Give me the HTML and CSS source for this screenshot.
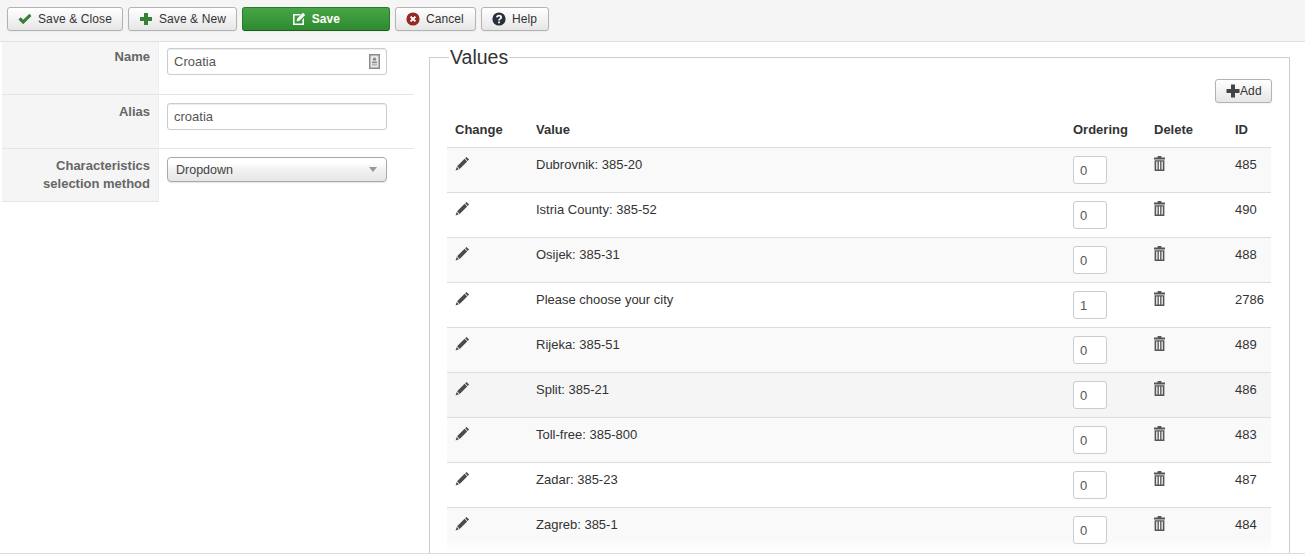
FILE: index.html
```html
<!DOCTYPE html>
<html lang="en">
<head>
<meta charset="utf-8">
<title>Edit characteristic</title>
<link rel="stylesheet" href="styles.css">
</head>
<body>
<svg class="defs" aria-hidden="true">
  <defs>
    <symbol id="pencil" viewBox="0 0 16 16"><path d="M12.2 1 15 3.8 13.6 5.2 10.8 2.4ZM10.2 3 13 5.8 5 13.8 2.2 11ZM1.8 11.8 4.2 14.2 0.6 15.4Z"/></symbol>
    <symbol id="trash" viewBox="0 0 11 15"><path d="M3.6 0H7.4V1.6H11V3.4H0V1.6H3.6ZM.6 4.2H10.4V15H.6ZM2.2 5.6V13.6H3.5V5.6ZM4.85 5.6V13.6H6.15V5.6ZM7.5 5.6V13.6H8.8V5.6Z" fill-rule="evenodd"/></symbol>
  </defs>
</svg>
<header class="toolbar">
  <button class="btn" type="button"><svg class="ico" viewBox="0 0 14 14"><path class="green" d="M.5 7.5 2.6 5.2 5.2 7.8 11.4 1.8 13.5 4 5.2 12.2Z"/></svg>Save &amp; Close</button>
  <button class="btn" type="button"><svg class="ico ico-plus" viewBox="0 0 14 14"><path class="green" d="M5 1H9V5H13V9H9V13H5V9H1V5H5Z"/></svg>Save &amp; New</button>
  <button class="btn btn-save" type="button"><svg class="ico" viewBox="0 0 14 14"><path fill="#fff" fill-rule="evenodd" d="M1 2H9L7.4 3.6H2.6V11.4H10.4V7.6L12 6V13H1ZM11 .8 13.2 3 7.4 8.8 4.6 9.4 5.2 6.6Z"/></svg>Save</button>
  <button class="btn btn-pad" type="button"><svg class="ico" viewBox="0 0 14 14"><circle cx="7" cy="7" r="6.6" fill="#942a25"/><path d="M4.6 4.6 9.4 9.4M9.4 4.6 4.6 9.4" stroke="#fff" stroke-width="2"/></svg>Cancel</button>
  <button class="btn btn-pad" type="button"><svg class="ico" viewBox="0 0 14 14"><circle cx="7" cy="7" r="6.6" fill="#26303a"/><path d="M4.9 5.4C5 3 9.2 3 9.2 5.4 9.2 7 7 6.8 7 8.4" fill="none" stroke="#fff" stroke-width="1.7"/><rect x="6.1" y="9.5" width="1.8" height="1.8" fill="#fff"/></svg>Help</button>
</header>
<main class="page">
  <section class="form">
    <div class="form-row row-name">
      <label class="form-label" for="name">Name</label>
      <div class="form-field">
        <div class="input-wrap">
          <input class="text-input" id="name" type="text" value="Croatia">
          <svg class="input-badge" viewBox="0 0 11 15"><rect x=".75" y=".75" width="9.5" height="13.5" fill="#e8e8e8" stroke="#8a8a8a" stroke-width="1.5"/><circle cx="5.5" cy="5.2" r="1.6" fill="#8a8a8a"/><rect x="3" y="7.6" width="5" height="1.6" fill="#8a8a8a"/><rect x="3" y="10" width="5" height="1.6" fill="#b5b5b5"/></svg>
        </div>
      </div>
    </div>
    <div class="form-row row-alias">
      <label class="form-label" for="alias">Alias</label>
      <div class="form-field"><input class="text-input" id="alias" type="text" value="croatia"></div>
    </div>
    <div class="form-row row-method">
      <div class="form-label">Characteristics selection method</div>
      <div class="form-field">
        <div class="select"><span>Dropdown</span><i class="caret"></i></div>
      </div>
    </div>
  </section>
  <fieldset class="values">
    <legend>Values</legend>
    <div class="values-actions">
      <button class="btn btn-add" type="button"><svg class="ico-add" viewBox="0 0 14 14"><path d="M5 .5H9V5H13.5V9H9V13.5H5V9H.5V5H5Z" fill="#444"/></svg>Add</button>
    </div>
    <table class="grid">
      <colgroup><col class="c-change"><col class="c-value"><col class="c-order"><col class="c-delete"><col class="c-id"></colgroup>
      <thead><tr><th>Change</th><th>Value</th><th>Ordering</th><th>Delete</th><th>ID</th></tr></thead>
      <tbody>
        <tr class="odd"><td><svg class="pen"><use href="#pencil"/></svg></td><td>Dubrovnik: 385-20</td><td><input class="order" type="text" value="0"></td><td><svg class="bin"><use href="#trash"/></svg></td><td>485</td></tr>
        <tr><td><svg class="pen"><use href="#pencil"/></svg></td><td>Istria County: 385-52</td><td><input class="order" type="text" value="0"></td><td><svg class="bin"><use href="#trash"/></svg></td><td>490</td></tr>
        <tr class="odd"><td><svg class="pen"><use href="#pencil"/></svg></td><td>Osijek: 385-31</td><td><input class="order" type="text" value="0"></td><td><svg class="bin"><use href="#trash"/></svg></td><td>488</td></tr>
        <tr><td><svg class="pen"><use href="#pencil"/></svg></td><td>Please choose your city</td><td><input class="order" type="text" value="1"></td><td><svg class="bin"><use href="#trash"/></svg></td><td>2786</td></tr>
        <tr class="odd"><td><svg class="pen"><use href="#pencil"/></svg></td><td>Rijeka: 385-51</td><td><input class="order" type="text" value="0"></td><td><svg class="bin"><use href="#trash"/></svg></td><td>489</td></tr>
        <tr class="hover"><td><svg class="pen"><use href="#pencil"/></svg></td><td>Split: 385-21</td><td><input class="order" type="text" value="0"></td><td><svg class="bin"><use href="#trash"/></svg></td><td>486</td></tr>
        <tr class="odd"><td><svg class="pen"><use href="#pencil"/></svg></td><td>Toll-free: 385-800</td><td><input class="order" type="text" value="0"></td><td><svg class="bin"><use href="#trash"/></svg></td><td>483</td></tr>
        <tr><td><svg class="pen"><use href="#pencil"/></svg></td><td>Zadar: 385-23</td><td><input class="order" type="text" value="0"></td><td><svg class="bin"><use href="#trash"/></svg></td><td>487</td></tr>
        <tr class="fade"><td><svg class="pen"><use href="#pencil"/></svg></td><td>Zagreb: 385-1</td><td><input class="order" type="text" value="0"></td><td><svg class="bin"><use href="#trash"/></svg></td><td>484</td></tr>
      </tbody>
    </table>
  </fieldset>
</main>
</body>
</html>
```

FILE: styles.css
```css
* { box-sizing: border-box; }
html, body { margin: 0; height: 555px; overflow: hidden; background: #fff; }
body { font: 13px/18px "Liberation Sans", Arial, sans-serif; color: #333; }
.defs { display: none; }

.toolbar {
  display: flex;
  gap: 5px;
  height: 42px;
  padding: 7px 0 0 7px;
  background: #f5f5f5;
  border-bottom: 1px solid #e1e1e1;
}
.btn {
  display: inline-flex;
  align-items: center;
  height: 24px;
  padding: 0 10px;
  font: 12px/18px "Liberation Sans", Arial, sans-serif;
  letter-spacing: .1px;
  color: #333;
  background: linear-gradient(#fff, #e6e6e6);
  border: 1px solid #b3b3b3;
  border-radius: 3px;
  box-shadow: 0 1px 2px rgba(0,0,0,.05);
}
.btn-pad { padding-right: 11px; }
.btn-save {
  justify-content: center;
  width: 148px;
  color: #fff;
  font-weight: bold;
  background: linear-gradient(#46a546, #2f8a2f);
  border-color: #2b7a2b #2b7a2b #1f5c1f;
}
.ico { width: 14px; height: 14px; margin-right: 6px; flex: none; }
.green { fill: #378137; }

.page {
  display: flex;
  align-items: flex-start;
  height: 512px;
  padding-left: 2px;
  border-bottom: 1px solid #ddd;
  overflow: hidden;
}

.form { width: 412px; flex: none; }
.form-row { display: flex; border-bottom: 1px solid #e5e5e5; }
.row-name { height: 53px; }
.row-alias { height: 54px; }
.row-method { height: 53px; border-bottom: 0; }
.form-label {
  width: 157px;
  flex: none;
  padding: 8px 8px 0 10px;
  text-align: right;
  font-size: 13px;
  font-weight: bold;
  color: #666;
  background: #f5f5f5;
  border-right: 1px solid #eee;
}
.row-name .form-label { padding-top: 6px; }
.row-method .form-label { border-bottom: 1px solid #e5e5e5; }
.form-field { padding: 8px 0 0 8px; }
.row-name .form-field { padding-top: 6px; }
.input-wrap { position: relative; width: 220px; }
.text-input {
  display: block;
  width: 220px;
  height: 27px;
  padding: 0 6px;
  font: 13px "Liberation Sans", Arial, sans-serif;
  color: #555;
  background: #fff;
  border: 1px solid #ccc;
  border-radius: 3px;
  box-shadow: inset 0 1px 1px rgba(0,0,0,.075);
}
.input-badge { position: absolute; top: 6px; right: 7px; width: 11px; height: 15px; }
.select {
  display: flex;
  align-items: center;
  justify-content: space-between;
  width: 220px;
  height: 25px;
  padding: 0 9px 0 8px;
  font-size: 12.5px;
  color: #444;
  background: linear-gradient(#fff 20%, #f2f2f2 50%, #e6e6e6);
  border: 1px solid #aaa;
  border-radius: 4px;
  box-shadow: 0 1px 1px rgba(0,0,0,.1);
}
.caret { border: 4px solid transparent; border-top: 5px solid #999; border-bottom: 0; }

.values {
  width: 861px;
  height: 530px;
  flex: none;
  min-width: 0;
  margin: 0 0 0 15px;
  padding: 7px 17px 0;
  border: 1px solid #ccc;
}
.values legend {
  padding: 0 1px;
  margin-left: 2px;
  font-size: 19.5px;
  line-height: 30px;
  color: #333;
}
.values-actions { display: flex; justify-content: flex-end; }
.btn-add { height: 24px; width: 57px; padding: 0 0 0 10px; }
.ico-add { width: 14px; height: 14px; flex: none; }

.grid { width: 824px; table-layout: fixed; border-collapse: collapse; margin-top: 10px; }
.c-change { width: 81px; }
.c-value { width: 537px; }
.c-order { width: 81px; }
.c-delete { width: 81px; }
.c-id { width: 44px; }
.grid th { padding: 8px; font-size: 13px; line-height: 18px; text-align: left; }
.grid td { height: 45px; padding: 8px; vertical-align: top; border-top: 1px solid #ddd; }
.odd { background: #f9f9f9; }
.hover { background: #f5f5f5; }
.fade { background: linear-gradient(#f9f9f9 70%, #fff); }
.pen { display: block; width: 15px; height: 15px; fill: #4a4a4a; }
.bin { display: block; width: 11px; height: 15px; fill: #555; }
.order {
  display: block;
  width: 34px;
  height: 28px;
  padding: 0 6px;
  font: 13px "Liberation Sans", Arial, sans-serif;
  color: #555;
  background: #fff;
  border: 1px solid #ccc;
  border-radius: 3px;
}
```
